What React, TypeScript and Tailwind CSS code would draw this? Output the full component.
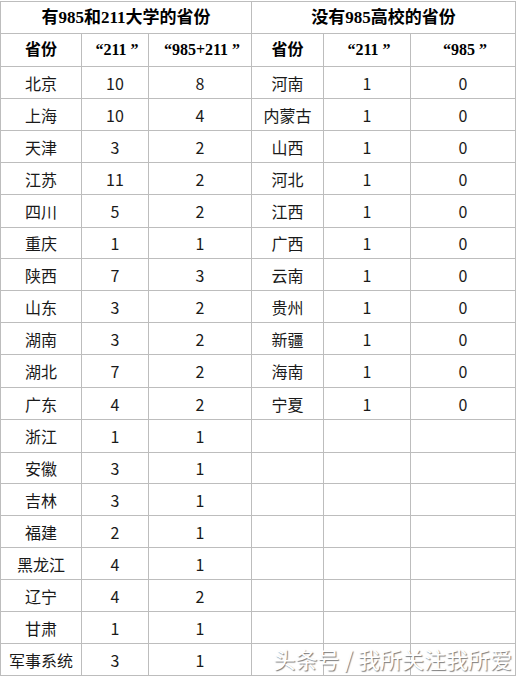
const left: [string, string, string][] = [
  ['北京', '10', '8'],
  ['上海', '10', '4'],
  ['天津', '3', '2'],
  ['江苏', '11', '2'],
  ['四川', '5', '2'],
  ['重庆', '1', '1'],
  ['陕西', '7', '3'],
  ['山东', '3', '2'],
  ['湖南', '3', '2'],
  ['湖北', '7', '2'],
  ['广东', '4', '2'],
  ['浙江', '1', '1'],
  ['安徽', '3', '1'],
  ['吉林', '3', '1'],
  ['福建', '2', '1'],
  ['黑龙江', '4', '1'],
  ['辽宁', '4', '2'],
  ['甘肃', '1', '1'],
  ['军事系统', '3', '1'],
];

const right: string[] = ['河南', '内蒙古', '山西', '河北', '江西', '广西', '云南', '贵州', '新疆', '海南', '宁夏'];

const cell = 'flex items-center justify-center border-r border-b border-[#bdbdbd]';
const serifBold = "font-['Liberation_Serif','Noto_Sans_CJK_SC',serif] font-bold text-[16px] text-black";
const sans = "font-['Noto_Sans_CJK_SC','Liberation_Sans',sans-serif] text-[16px] text-[#1a1a1a]";

// header quotes are wide, full-width style in the original
function Quoted({ text }: { text: string }) {
  return (
    <span className="whitespace-pre">
      <span className="inline-block w-[12px] text-right">“</span>
      {text}
      <span className="inline-block w-[12px] text-right">”</span>
    </span>
  );
}

export default function App() {
  return (
    <div className="relative w-[518px] h-[676px] bg-white overflow-hidden pt-px">
      <div className="grid grid-cols-[81px_67px_103px_72px_87px_105px] grid-rows-[32px_33px_32px_32px_32px_32px_33px_31px_32px_32px_32px_33px_32px_33px_31px_32px_32px_32px_32px_32px_32px] border-l border-t border-[#bdbdbd] w-[516px]">
        {/* titles */}
        <div className={`${cell} col-span-3 ${serifBold} text-[17px]`}>有985和211大学的省份</div>
        <div className={`${cell} col-span-3 ${serifBold} text-[17px]`}>没有985高校的省份</div>

        {/* headers */}
        <div className={`${cell} ${serifBold}`}>省份</div>
        <div className={`${cell} ${serifBold}`}><Quoted text="211" /></div>
        <div className={`${cell} ${serifBold}`}><Quoted text="985+211" /></div>
        <div className={`${cell} ${serifBold}`}>省份</div>
        <div className={`${cell} ${serifBold}`}><Quoted text="211" /></div>
        <div className={`${cell} ${serifBold}`}><Quoted text="985" /></div>

        {left.map((row, i) => {
          const r = right[i];
          return [
            <div key={`a${i}`} className={`${cell} ${sans}`}>{row[0]}</div>,
            <div key={`b${i}`} className={`${cell} ${sans}`}>{row[1]}</div>,
            <div key={`c${i}`} className={`${cell} ${sans}`}>{row[2]}</div>,
            <div key={`d${i}`} className={`${cell} ${sans} text-[15px]`}>{r ?? ''}</div>,
            <div key={`e${i}`} className={`${cell} ${sans} text-[13px]`}>{r ? '1' : ''}</div>,
            <div key={`f${i}`} className={`${cell} ${sans} text-[13px]`}>{r ? '0' : ''}</div>,
          ];
        })}
      </div>

      {/* watermark */}
      <div className="absolute right-[6px] bottom-[7px] font-['Noto_Sans_CJK_SC',sans-serif] text-[22px] leading-none text-white [text-shadow:1px_1px_1px_#7a7a7a]">
        头条号 / 我所关注我所爱
      </div>
    </div>
  );
}
